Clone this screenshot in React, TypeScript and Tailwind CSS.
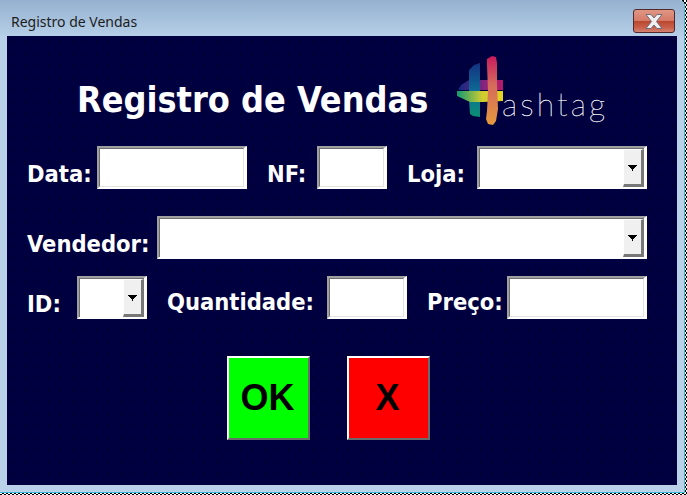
import React from 'react';

const labelClass = "font-['DejaVu_Sans',sans-serif] font-bold [font-stretch:condensed] text-[23.5px] leading-none text-white whitespace-nowrap";

function TextField({ className }: { className: string }) {
  return (
    <div className={`h-[43px] box-border border-t-2 border-l-2 border-b-2 border-r-[3px] border-t-[#a0a0a0] border-l-[#a0a0a0] border-b-white border-r-white ${className}`}>
      <div className="h-full box-border bg-white border-t border-l border-b border-r border-t-[#6e6e6e] border-l-[#6e6e6e] border-b-[#e3e3e3] border-r-[#e3e3e3]" />
    </div>
  );
}

function ComboField({ className }: { className: string }) {
  return (
    <div className={`h-[43px] box-border border-t-2 border-l-2 border-b-2 border-r-[3px] border-t-[#a0a0a0] border-l-[#a0a0a0] border-b-white border-r-white ${className}`}>
      <div className="h-full box-border bg-white border-t border-l border-t-[#6e6e6e] border-l-[#6e6e6e] flex justify-end">
        <div className="w-[21px] h-[38px] box-border bg-[#f0f0f0] border-t border-l border-white border-r-[3px] border-b-[3px] border-r-[#777777] border-b-[#777777] flex items-center justify-center">
          <svg width="9" height="6" viewBox="0 0 9 6" className="mt-[1px]">
            <path d="M0 0h9v1H8v1H7v1H6v1H5v2H4V4H3V3H2V2H1V1H0z" fill="#000" />
          </svg>
        </div>
      </div>
    </div>
  );
}

function Logo() {
  return (
    <svg width="160" height="80" viewBox="0 0 160 80" className="block">
      <defs>
        <linearGradient id="v1" x1="0" y1="0" x2="0" y2="1">
          <stop offset="0" stopColor="#14307f" />
          <stop offset="0.55" stopColor="#0c6f98" />
          <stop offset="1" stopColor="#0a8f72" />
        </linearGradient>
        <linearGradient id="v2" x1="0" y1="0" x2="0" y2="1">
          <stop offset="0" stopColor="#c81a5c" />
          <stop offset="0.4" stopColor="#d4685c" />
          <stop offset="1" stopColor="#e49a3e" />
        </linearGradient>
        <linearGradient id="h1" x1="0" y1="0" x2="1" y2="0">
          <stop offset="0" stopColor="#0c2a80" />
          <stop offset="0.6" stopColor="#8a2480" />
          <stop offset="1" stopColor="#b81a68" />
        </linearGradient>
        <linearGradient id="h2" x1="0" y1="0" x2="1" y2="0">
          <stop offset="0" stopColor="#129a72" />
          <stop offset="0.55" stopColor="#cfcc30" />
          <stop offset="1" stopColor="#e2d41e" />
        </linearGradient>
      </defs>
      <path d="M8 36l3-5 8-5h34v10z" fill="url(#h1)" />
      <path d="M19 16l5-5 6-2v54l-7-1-3-2-1-14v-14z" fill="url(#v1)" />
      <path d="M7 37h46v10l-20 1h-13L7 42z" fill="url(#h2)" />
      <path d="M37 5l5-3 4 1 1 6 0 20 1 26-2 12-3 4-5-1-2-5 1-8 1-20-1-26z" fill="url(#v2)" />
      <text x="52" y="62" fontFamily="Lato, sans-serif" fontWeight="100" fontSize="32" textLength={103} lengthAdjust="spacing" fill="#ffffff" stroke="#ffffff" strokeWidth="0.3">ashtag</text>
    </svg>
  );
}

function ActionButton({ label, color }: { label: string; color: string }) {
  return (
    <button className={`w-[83px] h-[84px] box-border border-2 border-t-white border-l-white border-b-[#6b6b6b] border-r-[#6b6b6b] pr-[2px] font-['Liberation_Sans',sans-serif] font-bold text-[36px] text-black ${color}`}>
      {label}
    </button>
  );
}

export default function App() {
  return (
    <div className="w-[687px] h-[495px] overflow-hidden flex flex-col bg-[repeating-conic-gradient(#000_0_25%,#fff_0_50%)] bg-[length:4px_4px]">
      <div className="w-[685px] h-[493px] shrink-0 box-border flex flex-col bg-[#b9d2ea] border-r border-b border-[#38bcd8] rounded-tr-[6px] overflow-hidden">
        <div className="h-[36px] shrink-0 pl-[11px] pr-[9px] flex items-start justify-between bg-gradient-to-b from-[#95b1cf] to-[#b6cfe8]">
          <span className="mt-[13px] font-['Noto_Sans',sans-serif] text-[14px] leading-[18px] text-[#1c1c1c]">Registro de Vendas</span>
          <button className="mt-[9px] w-[42px] h-[24px] box-border rounded-[3px] border border-[#51282c] bg-[linear-gradient(#e09684_0%,#d67a68_48%,#b9472e_50%,#c9604a_80%,#d58272_100%)] flex items-center justify-center">
            <svg width="20" height="17" viewBox="0 0 20 17">
              <path d="M2 1.5h5l3 3.5 3-3.5h5l-5.500 7 5.500 7h-5l-3-3.500-3 3.500H2l5.500-7z" fill="#efefef" stroke="#6d6d7a" strokeWidth="1" />
            </svg>
          </button>
        </div>

        <div className="h-[449px] shrink-0 flex pl-[7px]">
          <div className="w-[670px] h-full bg-[#000040] bg-[radial-gradient(#00002a_1px,transparent_1px)] bg-[length:12px_12px] pl-[20px] flex flex-col">
            <div className="h-[100px] flex items-start">
              <h1 className="ml-[50px] mt-[39px] font-['DejaVu_Sans',sans-serif] font-bold [font-stretch:condensed] text-[35.7px] leading-[50px] text-white whitespace-nowrap">Registro de Vendas</h1>
              <div className="ml-[22px] mt-[18px]">
                <Logo />
              </div>
            </div>

            <div className="mt-[10px] flex items-center">
              <span className={`${labelClass} w-[70px] mt-[15px]`}>Data:</span>
              <TextField className="w-[150px]" />
              <span className={`${labelClass} ml-[20px] w-[50px] mt-[15px]`}>NF:</span>
              <TextField className="w-[70px]" />
              <span className={`${labelClass} ml-[20px] w-[70px] mt-[15px]`}>Loja:</span>
              <ComboField className="w-[170px]" />
            </div>

            <div className="mt-[27px] flex items-center">
              <span className={`${labelClass} w-[130px] mt-[15px]`}>Vendedor:</span>
              <ComboField className="w-[490px]" />
            </div>

            <div className="mt-[17px] flex items-center">
              <span className={`${labelClass} w-[50px] mt-[14px]`}>ID:</span>
              <ComboField className="w-[70px]" />
              <span className={`${labelClass} ml-[20px] w-[160px] mt-[10px]`}>Quantidade:</span>
              <TextField className="w-[80px]" />
              <span className={`${labelClass} ml-[20px] w-[80px] mt-[10px]`}>Preço:</span>
              <TextField className="w-[140px]" />
            </div>

            <div className="mt-[37px] ml-[200px] flex gap-[37px]">
              <ActionButton label="OK" color="bg-[#00ff00]" />
              <ActionButton label="X" color="bg-[#ff0000]" />
            </div>
          </div>
        </div>
      </div>
    </div>
  );
}
